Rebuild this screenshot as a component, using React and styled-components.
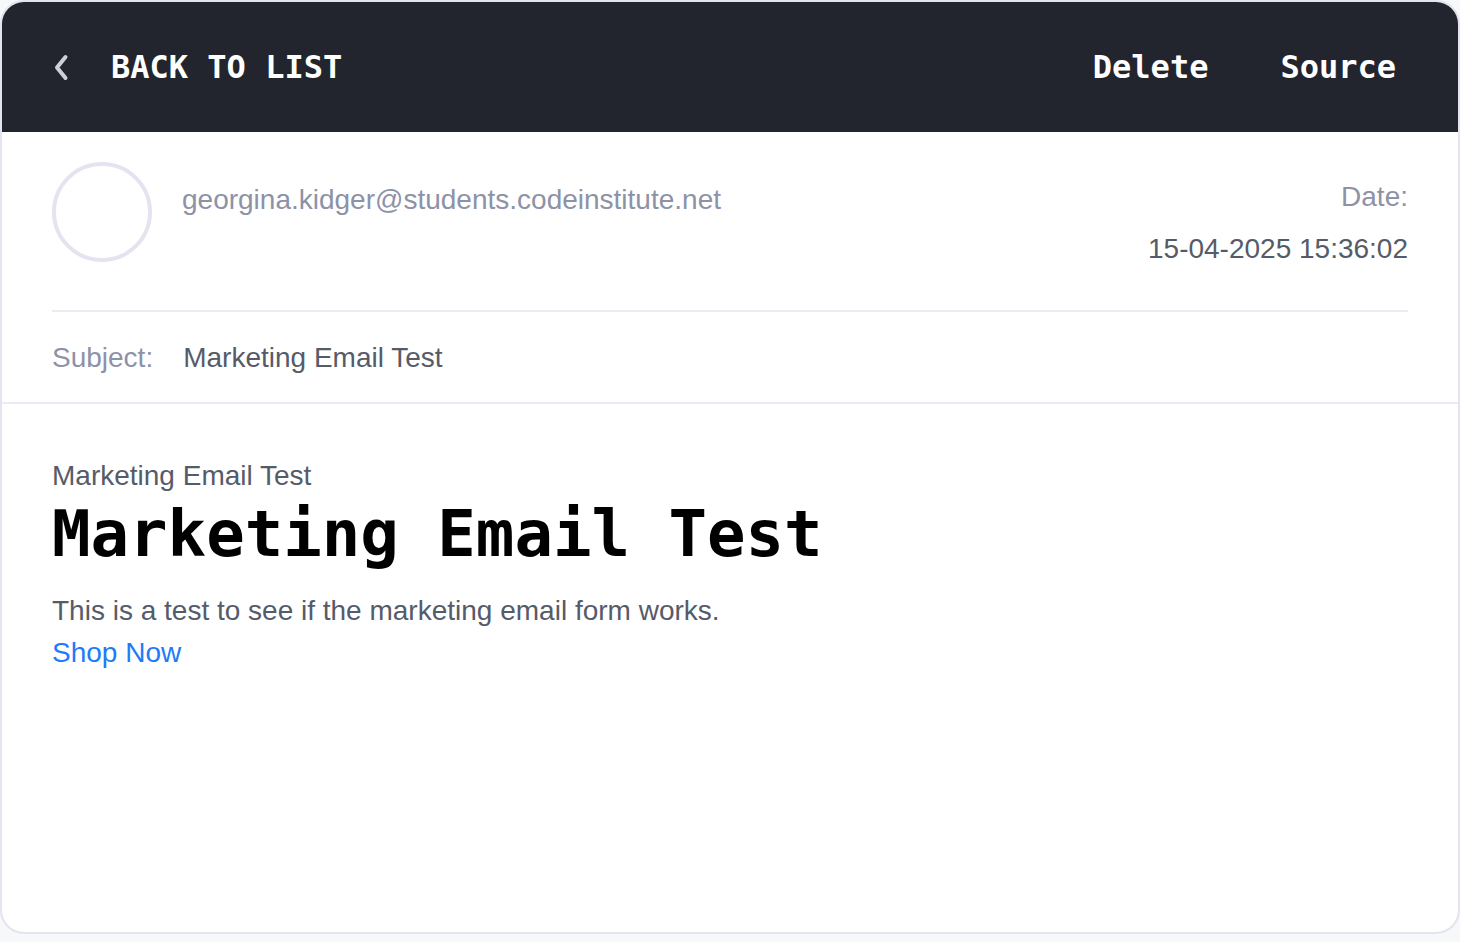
import React from "react";
import styled, { createGlobalStyle } from "styled-components";

const GlobalStyle = createGlobalStyle`
  *, *::before, *::after { box-sizing: border-box; }
  body {
    margin: 0;
    background: #f6f8f9;
    color: #565b69;
    font: 28px/42px "Liberation Sans", Arial, sans-serif;
  }
`;

const Card = styled.main`
  display: flex;
  flex-direction: column;
  min-height: calc(100vh - 8px);
  margin-bottom: 8px;
  overflow: hidden;
  background: #fff;
  border: 2px solid #e4e4f0;
  border-radius: 24px;
`;

const Toolbar = styled.header`
  display: flex;
  align-items: center;
  justify-content: space-between;
  padding: 44px 50px;
  background: #22252d;
`;

const Actions = styled.div`
  display: flex;
  gap: 48px;
`;

const ToolbarButton = styled.button`
  display: flex;
  align-items: center;
  gap: 41px;
  padding: 0 ${({ $flush }) => ($flush ? "0" : "12px")};
  border: 0;
  background: none;
  color: #fff;
  font: bold 32px/42px "DejaVu Sans Mono", monospace;
  white-space: nowrap;
  cursor: pointer;
`;

const Chevron = styled.svg`
  width: 18px;
  height: 28px;
  fill: none;
  stroke: #cfcfdc;
  stroke-width: 4;
  stroke-linecap: round;
  stroke-linejoin: round;
`;

const Details = styled.section`
  border-bottom: 2px solid #ebebf3;
  padding: 0 50px;
`;

const SenderRow = styled.div`
  display: flex;
  align-items: flex-start;
  gap: 30px;
  padding: 30px 0 35px;
  border-bottom: 2px solid #ebebf3;
`;

const Avatar = styled.div`
  flex: none;
  width: 100px;
  height: 100px;
  border: 4px solid #e4e4f0;
  border-radius: 50%;
`;

const Sender = styled.div`
  flex: 1;
  min-width: 0;
  padding-top: 17px;
  color: #8d92a7;
`;

const DateBlock = styled.div`
  padding-top: 9px;
  line-height: 52px;
  text-align: right;
`;

const Label = styled.div`
  color: #8d92a7;
`;

const SubjectRow = styled.div`
  display: flex;
  gap: 30px;
  padding: 25px 0 23px;
`;

const Message = styled.article`
  padding: 51px 50px;
`;

const Paragraph = styled.p`
  margin: 0;
`;

const Title = styled.h1`
  margin: 0 0 18px;
  color: #000;
  font: bold 64px/75px "DejaVu Sans Mono", monospace;
`;

const Link = styled.a`
  color: #217bf8;
  text-decoration: none;
`;

export default function App() {
  return (
    <>
      <GlobalStyle />
      <Card>
        <Toolbar>
          <ToolbarButton type="button" $flush>
            <Chevron viewBox="0 0 18 28" aria-hidden="true">
              <path d="M13.500 4L5 14.500L13.500 25" />
            </Chevron>
            BACK TO LIST
          </ToolbarButton>
          <Actions>
            <ToolbarButton type="button">Delete</ToolbarButton>
            <ToolbarButton type="button">Source</ToolbarButton>
          </Actions>
        </Toolbar>
        <Details>
          <SenderRow>
            <Avatar />
            <Sender>georgina.kidger@students.codeinstitute.net</Sender>
            <DateBlock>
              <Label>Date:</Label>
              <time dateTime="2025-04-15T15:36:02">15-04-2025 15:36:02</time>
            </DateBlock>
          </SenderRow>
          <SubjectRow>
            <Label>Subject:</Label>
            <div>Marketing Email Test</div>
          </SubjectRow>
        </Details>
        <Message>
          <Paragraph>Marketing Email Test</Paragraph>
          <Title>Marketing Email Test</Title>
          <Paragraph>This is a test to see if the marketing email form works.</Paragraph>
          <Link href="#shop">Shop Now</Link>
        </Message>
      </Card>
    </>
  );
}
